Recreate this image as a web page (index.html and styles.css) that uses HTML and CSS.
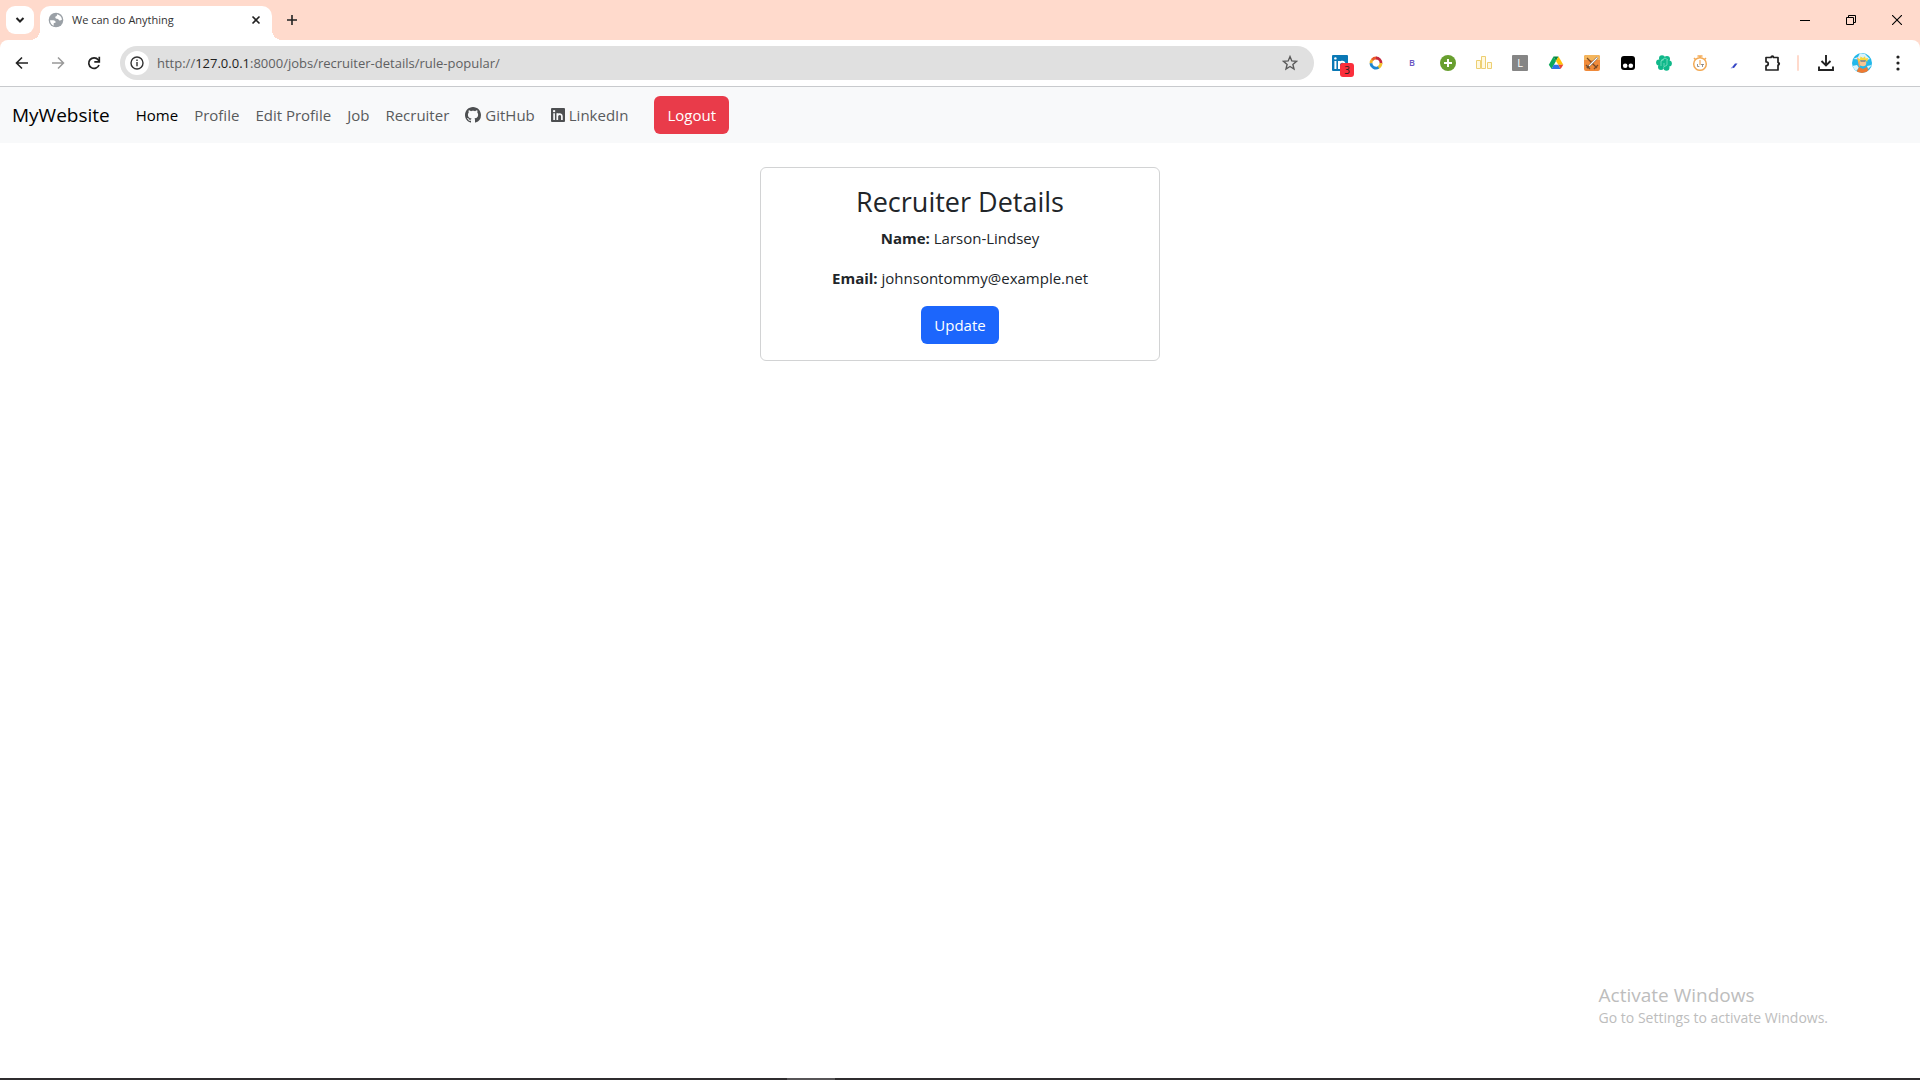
FILE: index.html
```html
<!DOCTYPE html>
<html lang="en">
<head>
<meta charset="utf-8">
<title>We can do Anything</title>
<link rel="stylesheet" href="styles.css">
</head>
<body>
<div class="screen">
  <header class="browser">
    <div class="tabstrip">
      <button class="tab-search" aria-label="Search tabs"><svg width="10" height="10" viewBox="0 0 10 10"><path d="M1.500 3l3.500 3.500L8.500 3" fill="none" stroke="#222" stroke-width="2"/></svg></button>
      <div class="tab">
        <svg width="16" height="16" viewBox="0 0 16 16"><circle cx="8" cy="8" r="7.300" fill="#9aa0a6"/><path d="M2 8.200h3.500q2.500.3 2.200 2.300l-2 .8v2.500q-3.200-1.500-3.700-5.600zM9 2.200q4.200.8 5 5.300-1.500 1.500-3 .8-.5-2-2.500-1.500-2-.5-1-2.200 1.800-.2 1.500-2.400z" fill="#fff"/></svg>
        <span class="tab-title">We can do Anything</span>
        <button class="plain" aria-label="Close tab"><svg width="10" height="10" viewBox="0 0 10 10"><path d="M1.500 1.500l7 7M8.500 1.500l-7 7" stroke="#222" stroke-width="1.600"/></svg></button>
      </div>
      <button class="plain new-tab" aria-label="New tab"><svg width="12" height="12" viewBox="0 0 12 12"><path d="M6 1v10M1 6h10" stroke="#222" stroke-width="1.600"/></svg></button>
      <div class="window-controls">
        <button class="plain" aria-label="Minimize"><svg width="10" height="10" viewBox="0 0 10 10"><path d="M0 5.500h10" stroke="#000"/></svg></button>
        <button class="plain" aria-label="Restore"><svg width="10" height="10" viewBox="0 0 10 10"><path d="M.5 2.500h7v7h-7zM2.500 2.500v-2h7v7h-2" fill="none" stroke="#000"/></svg></button>
        <button class="plain" aria-label="Close"><svg width="10" height="10" viewBox="0 0 10 10"><path d="M0 0l10 10M10 0L0 10" stroke="#000" stroke-width="1.100"/></svg></button>
      </div>
    </div>
    <div class="toolbar">
      <div class="history">
        <button class="plain" aria-label="Back"><svg width="14" height="14" viewBox="0 0 14 14"><path d="M13 7H2M7 1.500L1.500 7 7 12.500" fill="none" stroke="#222" stroke-width="1.600"/></svg></button>
        <button class="plain" aria-label="Forward"><svg width="14" height="14" viewBox="0 0 14 14"><path d="M1 7h11M7 1.500L12.500 7 7 12.500" fill="none" stroke="#999" stroke-width="1.500"/></svg></button>
        <button class="plain" aria-label="Reload"><svg width="14" height="14" viewBox="0 0 14 14"><path d="M12 9a5.300 5.300 0 1 1-.8-5.200L12 5" fill="none" stroke="#222" stroke-width="1.700"/><path d="M12.300.8v5h-5" fill="none" stroke="#222" stroke-width="1.700"/></svg></button>
      </div>
      <div class="omnibox">
        <span class="site-info"><svg width="14" height="14" viewBox="0 0 14 14"><circle cx="7" cy="7" r="6" fill="none" stroke="#333" stroke-width="1.400"/><path d="M7 6v4.200M7 3.600v1.500" stroke="#333" stroke-width="1.400"/></svg></span>
        <a class="url" href="#">http://<span class="host">127.0.0.1</span>:8000/jobs/recruiter-details/rule-popular/</a>
        <button class="plain" aria-label="Bookmark"><svg width="16" height="16" viewBox="0 0 16 16"><path d="M8 1.600l1.800 4.300 4.700.4-3.600 3.100 1.100 4.600L8 11.500 4 14l1.100-4.600L1.500 6.300l4.700-.4z" fill="none" stroke="#5a5a5a" stroke-width="1.400"/></svg></button>
      </div>
      <div class="extensions">
        <span class="ext badge-host"><svg width="16" height="16" viewBox="0 0 16 16"><rect width="16" height="16" rx="1" fill="#0a78b5"/><path d="M3.400 6v8M7 14V6M7 9.500C7 7 12.500 5 12.500 9v5" stroke="#fff" stroke-width="2" fill="none"/><circle cx="3.400" cy="3.400" r="1.200" fill="#fff"/></svg><span class="badge">3</span></span>
        <span class="ext"><svg width="16" height="16" viewBox="0 0 16 16" fill="none" stroke-width="2.800"><path d="M3 8.500A5 5 0 0 1 4.500 4.500" stroke="#f0b429"/><path d="M4.200 4.800A5 5 0 0 1 8.500 3" stroke="#e9572b"/><path d="M8 3a5 5 0 0 1 5 5.500" stroke="#c5283d"/><path d="M13 8a5 5 0 0 1-3 4.600" stroke="#f3c22f"/><path d="M10.500 12.400A5 5 0 0 1 3 8.300" stroke="#1c86d1"/></svg></span>
        <span class="ext letter-b">B</span>
        <span class="ext"><svg width="16" height="16" viewBox="0 0 16 16"><circle cx="8" cy="8" r="8" fill="#689f2f"/><path d="M8 4v8M4 8h8" stroke="#fff" stroke-width="2"/></svg></span>
        <span class="ext"><svg width="16" height="16" viewBox="0 0 16 16"><path d="M.5 5.500h4v8h-4zM5.500 1.500h4v12h-4zM11.500 7.500h4v6h-4z" fill="#fff8df" stroke="#edcf72"/></svg></span>
        <span class="ext letter-l">L</span>
        <span class="ext"><svg width="16" height="16" viewBox="0 0 16 16"><path d="M5.500 1.500L8 5.900 3.600 14 .8 9.800z" fill="#0ca85b"/><path d="M5.500 1.500h5L8 5.900z" fill="#078540"/><path d="M10.500 1.500l4.800 8.300h-5L8 5.900z" fill="#ffc107"/><path d="M5.700 9.800h4.600L12.600 14h-9z" fill="#2d73e8"/><path d="M10.300 9.800h5L12.600 14z" fill="#ea4335"/></svg></span>
        <span class="ext"><svg width="16" height="16" viewBox="0 0 16 16"><rect width="16" height="16" rx="2" fill="#f08a3a"/><path d="M0 5V2q0-2 2-2h12q2 0 2 2v3z" fill="#f4b55c"/><path d="M3 3l10 10M2 10l4 4M10 14l4-4" stroke="#7b4a25" stroke-width="1.300"/><path d="M13.500 2.500L3 13" stroke="#6b4a32" stroke-width="2.200"/><path d="M13.500 2.500L5 11" stroke="#fff" stroke-width="1.200"/></svg></span>
        <span class="ext"><svg width="16" height="16" viewBox="0 0 16 16"><rect x="1" y="1" width="14" height="14" rx="3" fill="#000"/><circle cx="5.200" cy="10.800" r="2.300" fill="#fff"/><circle cx="10.800" cy="10.800" r="2.300" fill="#fff"/></svg></span>
        <span class="ext"><svg width="16" height="16" viewBox="0 0 16 16"><circle cx="8" cy="8" r="5" fill="#10b88a"/><g fill="#10b88a"><circle cx="6" cy="3.300" r="3"/><circle cx="11" cy="4" r="3"/><circle cx="13" cy="8.500" r="2.900"/><circle cx="10.500" cy="12.700" r="3"/><circle cx="5" cy="12" r="3"/><circle cx="3" cy="7.500" r="2.900"/></g><path d="M5 5.500l4-2.500 3 2M11 5v5l-4 2.500M5 11V6l3-1.500M8 8v3" fill="none" stroke="#8fe5cb" stroke-width=".7"/></svg></span>
        <span class="ext"><svg width="16" height="16" viewBox="0 0 16 16" fill="none" stroke="#f3aa55"><circle cx="8" cy="9" r="6.300" stroke-width="1.500"/><path d="M5.500 1h5M8 1v2M2 3l1.500 1.500M14 3l-1.500 1.500" stroke-width="1.500"/><path d="M8 5v5" stroke-width="1.200"/><path d="M5.500 9v2.500h1.800M9 9.500h3M10.500 9.500V12" stroke="#777" stroke-width=".8"/></svg></span>
        <span class="ext"><svg width="16" height="16" viewBox="0 0 16 16"><path d="M3.500 13l3.500-4.500h2.500L6 13z" fill="#3344c4"/><path d="M2.500 13.500l2-2 1 1.500z" fill="#8792e0"/></svg></span>
        <button class="plain ext" aria-label="Extensions"><svg width="18" height="18" viewBox="0 0 18 18"><path d="M3 3.500h5a1.300 1.300 0 0 1 2.600 0H15v5a1.300 1.300 0 0 1 0 2.600V16H3v-4.200c3 0 3-4 0-4z" fill="none" stroke="#222" stroke-width="1.700" stroke-linejoin="round"/><path d="M7.500 3.500q1.700-3 3.400 0zM15 8q3 1.700 0 3.400z" fill="#222"/></svg></button>
      </div>
      <span class="divider"></span>
      <div class="profile-tools">
        <button class="plain" aria-label="Downloads"><svg width="18" height="18" viewBox="0 0 18 18"><path d="M9 1v10M4.500 7L9 11.500 13.500 7M2 12.500V16h14v-3.500" fill="none" stroke="#222" stroke-width="1.900"/></svg></button>
        <button class="plain" aria-label="Account"><svg width="20" height="20" viewBox="0 0 20 20"><defs><clipPath id="disc"><circle cx="10" cy="10" r="10"/></clipPath></defs><g clip-path="url(#disc)"><path d="M0 0h20v20H0z" fill="#22b8ea"/><path d="M1 6l5-2 2-4 5 1 5 5-3 1z" fill="#d9f2fa"/><path d="M0 13l5-1 2 3-3 3zM20 12l-5 1 1 3z" fill="#d9f2fa"/><path d="M4 20l3-6 4 2 4-2 2 6z" fill="#ee7a32"/><path d="M5 4l3 3 1 5-2 2z" fill="#f3a15c"/><circle cx="11" cy="10" r="3.300" fill="#f7c592"/><path d="M6.500 9L6 5.500l2 .5.500-2.500L11 5l2-1.800.5 2.300 2.500-.5-.8 4-2-2H9z" fill="#f8d838"/><path d="M8.500 8h5" stroke="#375b80"/></g></svg></button>
        <button class="plain" aria-label="Menu"><svg width="4" height="16" viewBox="0 0 4 16" fill="#222"><circle cx="2" cy="2" r="1.600"/><circle cx="2" cy="8" r="1.600"/><circle cx="2" cy="14" r="1.600"/></svg></button>
      </div>
    </div>
  </header>
  <nav class="navbar">
    <a class="brand" href="#">MyWebsite</a>
    <a class="nav-link active" href="#">Home</a>
    <a class="nav-link" href="#">Profile</a>
    <a class="nav-link" href="#">Edit Profile</a>
    <a class="nav-link" href="#">Job</a>
    <a class="nav-link" href="#">Recruiter</a>
    <a class="nav-link" href="#"><svg width="16" height="16" viewBox="0 0 16 16" fill="#4d4f51"><path d="M8 0C3.580 0 0 3.580 0 8c0 3.540 2.290 6.530 5.470 7.590.4.070.55-.17.55-.38 0-.19-.01-.82-.01-1.490-2.010.37-2.530-.49-2.690-.94-.09-.23-.48-.94-.82-1.130-.28-.15-.68-.52-.01-.53.63-.01 1.080.58 1.230.82.72 1.210 1.870.87 2.330.66.070-.52.28-.87.51-1.070-1.780-.2-3.640-.89-3.640-3.950 0-.87.31-1.590.82-2.150-.08-.2-.36-1.020.08-2.120 0 0 .67-.21 2.200.82.64-.18 1.320-.27 2-.27s1.360.09 2 .27c1.530-1.040 2.200-.82 2.200-.82.44 1.100.16 1.920.08 2.120.51.56.82 1.270.82 2.150 0 3.070-1.870 3.750-3.650 3.950.29.25.54.73.54 1.480 0 1.070-.01 1.930-.01 2.200 0 .21.15.46.55.38A8.010 8.010 0 0 0 16 8c0-4.420-3.580-8-8-8"/></svg>GitHub</a>
    <a class="nav-link" href="#"><svg width="14" height="14" viewBox="0 0 14 14"><rect width="14" height="14" rx="1" fill="#4d4f51"/><path d="M3.100 5.300V12M6.300 12V5.300M6.300 8.500c0-3 4.600-3.400 4.600 0V12" fill="none" stroke="#f8f9fa" stroke-width="1.700"/><circle cx="3.100" cy="3.100" r="1.200" fill="#f8f9fa"/></svg>LinkedIn</a>
    <button class="btn logout">Logout</button>
  </nav>
  <main class="page">
    <section class="card">
      <h1>Recruiter Details</h1>
      <p><strong>Name:</strong> Larson-Lindsey</p>
      <p><strong>Email:</strong> johnsontommy@example.net</p>
      <button class="btn update">Update</button>
    </section>
  </main>
  <aside class="activation">
    <div class="activation-title">Activate Windows</div>
    <div>Go to Settings to activate Windows.</div>
  </aside>
  <footer class="taskbar"><span class="task"></span></footer>
</div>
</body>
</html>
```
FILE: styles.css
```css
* { box-sizing: border-box; }
body {
  margin: 0;
  background: #fff;
  color: #212529;
  font: 15px/24px "Open Sans", "Noto Sans", sans-serif;
}
a { color: inherit; text-decoration: none; }
button { font: inherit; border: 0; padding: 0; cursor: pointer; }
svg { display: block; flex: none; }
.screen { min-height: 100vh; display: flex; flex-direction: column; }
.plain { background: none; display: flex; align-items: center; justify-content: center; }

.browser { background: #ffdacc; }
.tabstrip { height: 40px; display: flex; align-items: center; padding-left: 6px; }
.tab-search {
  width: 28px; height: 28px; border-radius: 9px; background: #fff;
  display: flex; align-items: center; justify-content: center;
}
.tab {
  position: relative; align-self: flex-end;
  width: 232px; height: 34px; margin-left: 6px; padding: 0 11px 6px 8px;
  display: flex; align-items: center; gap: 8px;
  background: #fff; border-radius: 10px 10px 0 0;
  font-size: 11px; line-height: 16px;
}
.tab::before, .tab::after {
  content: ""; position: absolute; bottom: 0; width: 10px; height: 10px;
}
.tab::before { right: 100%; background: radial-gradient(circle at 0 0, transparent 10px, #fff 10px); }
.tab::after { left: 100%; background: radial-gradient(circle at 100% 0, transparent 10px, #fff 10px); }
.tab-title { flex: 1; color: #333; }
.new-tab { width: 40px; height: 28px; }
.window-controls { margin-left: auto; display: flex; }
.window-controls .plain { width: 46px; height: 40px; }

.toolbar {
  height: 47px; display: flex; align-items: center; padding: 0 20px 0 14px;
  background: #fff; border-bottom: 1px solid #c8cacd; border-radius: 8px 8px 0 0;
}
.history { display: flex; gap: 20px; }
.history .plain { width: 16px; height: 32px; }
.omnibox {
  flex: 1; height: 34px; margin-left: 18px; padding: 0 16px 0 5px;
  display: flex; align-items: center; gap: 8px;
  background: #e0e0e0; border-radius: 17px;
}
.site-info {
  width: 24px; height: 24px; border-radius: 50%; background: #fff;
  display: flex; align-items: center; justify-content: center;
}
.url { flex: 1; font-size: 13px; color: #5f6062; }
.host { color: #222; }
.extensions { display: flex; gap: 20px; margin-left: 18px; }
.ext { width: 16px; height: 16px; display: flex; align-items: center; justify-content: center; }
.badge-host { position: relative; }
.badge {
  position: absolute; left: 8px; top: 8px; width: 14px; height: 14px;
  border-radius: 3px; background: #fb2f3c; color: #222;
  font-size: 10px; line-height: 14px; text-align: center;
}
.letter-b { color: #6a55c2; font-size: 9px; font-weight: 600; }
.letter-l { background: #858585; border-radius: 1px; color: #fff; font-size: 11px; }
.divider { width: 2px; height: 16px; margin: 0 18px 0 17px; background: #ffdacc; border-radius: 1px; }
.profile-tools { display: flex; gap: 17px; align-items: center; }
.profile-tools .plain:last-child { margin-left: 7px; }

.navbar {
  height: 56px; padding: 0 12px; display: flex; align-items: center; gap: 16px;
  background: #f8f9fa; color: #595b5d;
}
.brand { font-size: 19px; color: #000; margin-right: 10px; }
.nav-link { display: flex; align-items: center; gap: 4px; }
.nav-link.active { color: #000; }
.btn { height: 38px; padding: 0 13px; border-radius: 6px; color: #fff; }
.logout { background: #e93b4a; margin-left: 10px; }
.update { background: #1c66fc; }

.page { flex: 1; padding: 24px 12px; }
.card {
  max-width: 400px; margin: 0 auto; padding: 16px;
  border: 1px solid #d2d3d4; border-radius: 6px; text-align: center;
}
h1 { margin: 0 0 6px; font-size: 27px; line-height: 36px; font-weight: 500; }
p { margin: 0 0 16px; }

.activation { align-self: flex-end; margin: 0 92px 50px 0; color: #bdbdbd; font-size: 14px; line-height: 20px; }
.activation-title { font-size: 19px; line-height: 26px; }
.taskbar { height: 2px; background: #2f2d2f; display: flex; }
.task { width: 48px; margin-left: 41%; background: #575557; }
```
